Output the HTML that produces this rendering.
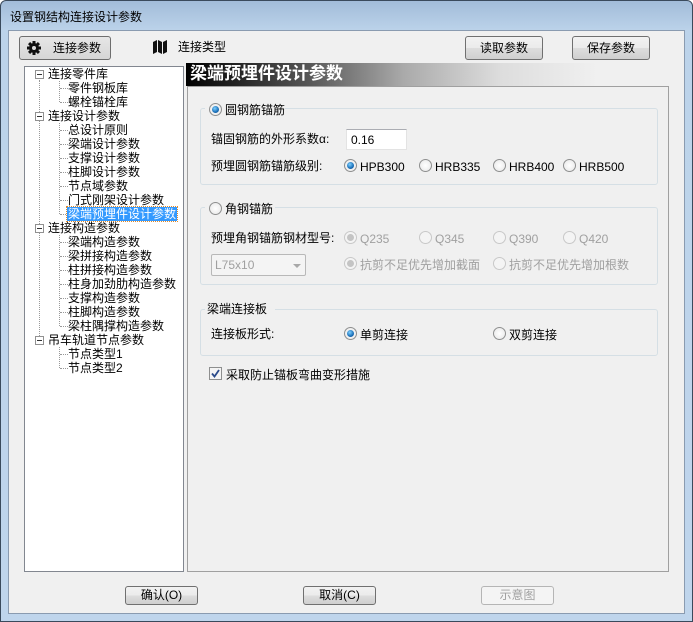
<!DOCTYPE html>
<html><head><meta charset="utf-8"><style>
*{box-sizing:border-box;margin:0;padding:0}
body{width:693px;height:622px;overflow:hidden;font-family:"Liberation Sans","Noto Sans CJK SC","WenQuanYi Zen Hei",sans-serif;font-size:12px;color:#000;background:#fff}
.win{position:absolute;left:0;top:0;width:693px;height:622px;border:1px solid #3a4a5c;border-radius:6px 6px 0 0;background:linear-gradient(#a2bcd9,#bcd3ea 30px,#bfd5ec);}
.client{position:absolute;left:8px;top:30px;width:677px;height:584px;background:#f0f0f0;border:1px solid #8a9bb0}
.t{position:absolute;white-space:nowrap;line-height:14px}
.btn{position:absolute;border:1px solid #707070;border-radius:3px;background:linear-gradient(#f2f2f2,#ebebeb 50%,#dddddd 51%,#cfcfcf);text-align:center;font-size:12px}
.tree{position:absolute;left:24px;top:66px;width:160px;height:506px;background:#fff;border:1px solid #828790}
.panel{position:absolute;left:187px;top:86px;width:482px;height:486px;border:1px solid #a0a0a0}
.grp{position:absolute;border:1px solid #d5dfe5;border-radius:3px}
.r{position:absolute;width:13px;height:13px;border-radius:50%;border:1px solid #8e8f8f;background:radial-gradient(#fff,#e6e6e6)}
.r.on::after{content:"";position:absolute;left:2px;top:2px;width:7px;height:7px;border-radius:50%;background:radial-gradient(circle at 40% 35%,#7fd0ff,#1a6fb8 60%,#0c3f78)}
.r.dis{border-color:#c8c8c8;background:#f4f4f4}
.r.dis.on::after{background:#c4c4c4}
.g{color:#a0a0a0}
.box{position:absolute;width:9px;height:9px;border:1px solid #919191;background:#fff}
.box::after{content:"";position:absolute;left:1px;top:3px;width:5px;height:1px;background:#333}
.dv{position:absolute;border-left:1px dotted #999}
.dh{position:absolute;border-top:1px dotted #999;width:8px}
</style></head><body>
<div class="win">
<div class="t" style="left:9px;top:9px;font-size:12px">设置钢结构连接设计参数</div>
</div>
<div class="client"></div>
<div class="btn" style="left:19px;top:36px;width:92px;height:24px;background:linear-gradient(#e6e6e6,#d6d6d6);border-color:#6e6e6e"></div>
<svg style="position:absolute;left:26px;top:40px" width="16" height="16" viewBox="0 0 16 16"><g fill="#111"><circle cx="8" cy="8" r="5"/><rect x="6.5" y="1" width="3" height="14"/><rect x="1" y="6.5" width="14" height="3"/><rect x="6.5" y="1" width="3" height="14" transform="rotate(45 8 8)"/><rect x="6.5" y="1" width="3" height="14" transform="rotate(-45 8 8)"/></g><circle cx="8" cy="8" r="2" fill="#ddd"/></svg>
<div class="t" style="left:53px;top:41px">连接参数</div>
<svg style="position:absolute;left:152px;top:40px" width="16" height="14" viewBox="0 0 16 14"><path d="M1 2 L5 0 L5 12 L1 14Z M6 0 L10 2 L10 14 L6 12Z M11 2 L15 0 L15 12 L11 14Z" fill="#111"/></svg>
<div class="t" style="left:178px;top:40px">连接类型</div>
<div class="btn" style="left:465px;top:36px;width:78px;height:24px;line-height:22px">读取参数</div>
<div class="btn" style="left:572px;top:36px;width:78px;height:24px;line-height:22px">保存参数</div>

<div class="tree"></div>
<div class="dv" style="left:39px;top:80px;height:264px"></div>
<div class="dv" style="left:59px;top:81px;height:21px"></div>
<div class="dv" style="left:59px;top:123px;height:91px"></div>
<div class="dv" style="left:59px;top:235px;height:91px"></div>
<div class="dv" style="left:59px;top:347px;height:21px"></div>
<div class="box" style="left:35px;top:70px"></div>
<div class="box" style="left:35px;top:112px"></div>
<div class="box" style="left:35px;top:224px"></div>
<div class="box" style="left:35px;top:336px"></div>
<div class="t" style="left:48px;top:67px">连接零件库</div>
<div class="dh" style="left:60px;top:88px"></div><div class="t" style="left:68px;top:81px">零件钢板库</div>
<div class="dh" style="left:60px;top:102px"></div><div class="t" style="left:68px;top:95px">螺栓锚栓库</div>
<div class="t" style="left:48px;top:109px">连接设计参数</div>
<div class="dh" style="left:60px;top:130px"></div><div class="t" style="left:68px;top:123px">总设计原则</div>
<div class="dh" style="left:60px;top:144px"></div><div class="t" style="left:68px;top:137px">梁端设计参数</div>
<div class="dh" style="left:60px;top:158px"></div><div class="t" style="left:68px;top:151px">支撑设计参数</div>
<div class="dh" style="left:60px;top:172px"></div><div class="t" style="left:68px;top:165px">柱脚设计参数</div>
<div class="dh" style="left:60px;top:186px"></div><div class="t" style="left:68px;top:179px">节点域参数</div>
<div class="dh" style="left:60px;top:200px"></div><div class="t" style="left:68px;top:193px">门式刚架设计参数</div>
<div class="dh" style="left:60px;top:214px"></div><div class="t" style="left:67px;top:207px;background:#3399ff;color:#fff;outline:1px dotted #e08a2a;padding:0 1px">梁端预埋件设计参数</div>
<div class="t" style="left:48px;top:221px">连接构造参数</div>
<div class="dh" style="left:60px;top:242px"></div><div class="t" style="left:68px;top:235px">梁端构造参数</div>
<div class="dh" style="left:60px;top:256px"></div><div class="t" style="left:68px;top:249px">梁拼接构造参数</div>
<div class="dh" style="left:60px;top:270px"></div><div class="t" style="left:68px;top:263px">柱拼接构造参数</div>
<div class="dh" style="left:60px;top:284px"></div><div class="t" style="left:68px;top:277px">柱身加劲肋构造参数</div>
<div class="dh" style="left:60px;top:298px"></div><div class="t" style="left:68px;top:291px">支撑构造参数</div>
<div class="dh" style="left:60px;top:312px"></div><div class="t" style="left:68px;top:305px">柱脚构造参数</div>
<div class="dh" style="left:60px;top:326px"></div><div class="t" style="left:68px;top:319px">梁柱隅撑构造参数</div>
<div class="t" style="left:48px;top:333px">吊车轨道节点参数</div>
<div class="dh" style="left:60px;top:354px"></div><div class="t" style="left:68px;top:347px">节点类型1</div>
<div class="dh" style="left:60px;top:368px"></div><div class="t" style="left:68px;top:361px">节点类型2</div>

<div class="panel"></div>
<div style="position:absolute;left:186px;top:63px;width:484px;height:23px;background:linear-gradient(90deg,#000 0%,#555 25%,#aaa 45%,#ddd 65%,#f0f0f0 85%)"></div>
<div class="t" style="left:190px;top:64px;font-size:17px;line-height:20px;font-weight:bold;color:#fff">梁端预埋件设计参数</div>

<div class="grp" style="left:200px;top:108px;width:458px;height:77px"></div>
<div style="position:absolute;left:205px;top:101px;width:80px;height:16px;background:#f0f0f0"></div>
<div class="r on" style="left:209px;top:103px"></div><div class="t" style="left:225px;top:103px">圆钢筋锚筋</div>
<div class="t" style="left:211px;top:132px">锚固钢筋的外形系数α:</div>
<div style="position:absolute;left:346px;top:129px;width:61px;height:21px;background:#fff;border:1px solid #e3e3e3;border-top-color:#abadb3"></div>
<div class="t" style="left:351px;top:133px">0.16</div>
<div class="t" style="left:211px;top:159px">预埋圆钢筋锚筋级别:</div>
<div class="r on" style="left:344px;top:159px"></div><div class="t" style="left:360px;top:160px">HPB300</div>
<div class="r" style="left:419px;top:159px"></div><div class="t" style="left:435px;top:160px">HRB335</div>
<div class="r" style="left:493px;top:159px"></div><div class="t" style="left:509px;top:160px">HRB400</div>
<div class="r" style="left:563px;top:159px"></div><div class="t" style="left:579px;top:160px">HRB500</div>

<div class="grp" style="left:200px;top:207px;width:458px;height:78px"></div>
<div style="position:absolute;left:205px;top:200px;width:70px;height:16px;background:#f0f0f0"></div>
<div class="r" style="left:209px;top:202px"></div><div class="t" style="left:225px;top:202px">角钢锚筋</div>
<div class="t" style="left:211px;top:231px">预埋角钢锚筋钢材型号:</div>
<div class="r dis on" style="left:344px;top:231px"></div><div class="t g" style="left:360px;top:232px">Q235</div>
<div class="r dis" style="left:419px;top:231px"></div><div class="t g" style="left:435px;top:232px">Q345</div>
<div class="r dis" style="left:493px;top:231px"></div><div class="t g" style="left:509px;top:232px">Q390</div>
<div class="r dis" style="left:563px;top:231px"></div><div class="t g" style="left:579px;top:232px">Q420</div>
<div style="position:absolute;left:211px;top:254px;width:95px;height:22px;border:1px solid #b8b8b8;border-radius:2px;background:#f4f4f4"></div>
<div class="t g" style="left:215px;top:258px">L75x10</div>
<div style="position:absolute;left:293px;top:264px;border:4px solid transparent;border-top:4px solid #a8a8a8;border-bottom:0"></div>
<div class="r dis on" style="left:344px;top:257px"></div><div class="t g" style="left:360px;top:258px">抗剪不足优先增加截面</div>
<div class="r dis" style="left:493px;top:257px"></div><div class="t g" style="left:509px;top:258px">抗剪不足优先增加根数</div>

<div class="grp" style="left:200px;top:309px;width:458px;height:47px"></div>
<div style="position:absolute;left:205px;top:301px;width:70px;height:16px;background:#f0f0f0"></div>
<div class="t" style="left:207px;top:302px">梁端连接板</div>
<div class="t" style="left:211px;top:327px">连接板形式:</div>
<div class="r on" style="left:344px;top:327px"></div><div class="t" style="left:360px;top:328px">单剪连接</div>
<div class="r" style="left:493px;top:327px"></div><div class="t" style="left:509px;top:328px">双剪连接</div>

<div style="position:absolute;left:209px;top:367px;width:13px;height:13px;border:1px solid #8e8f8f;background:#f4f4f4"></div>
<svg style="position:absolute;left:211px;top:369px" width="9" height="9" viewBox="0 0 9 9"><path d="M1 4.5 L3.5 7.5 L8 1" stroke="#2a4a8a" stroke-width="1.8" fill="none"/></svg>
<div class="t" style="left:226px;top:368px">采取防止锚板弯曲变形措施</div>

<div class="btn" style="left:125px;top:586px;width:73px;height:19px;line-height:17px">确认(O)</div>
<div class="btn" style="left:303px;top:586px;width:73px;height:19px;line-height:17px">取消(C)</div>
<div class="btn" style="left:481px;top:586px;width:73px;height:19px;line-height:17px;border-color:#b5b5b5;background:#f4f4f4;color:#a0a0a0">示意图</div>
</body></html>
